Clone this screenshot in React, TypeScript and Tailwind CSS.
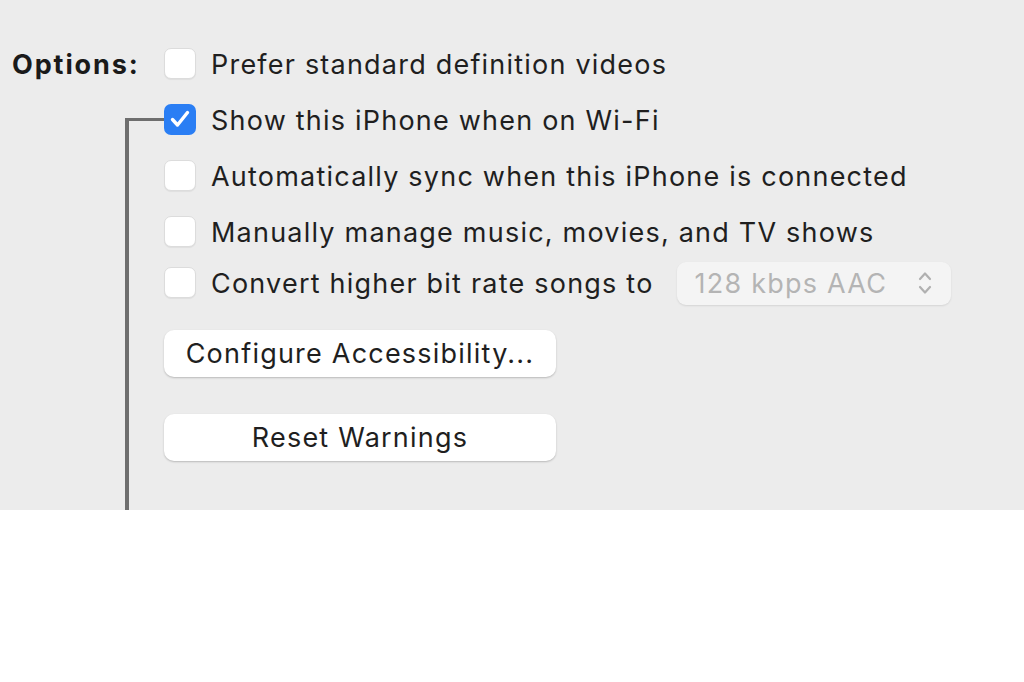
import React from "react";

const font = { fontFamily: "Inter, 'Noto Sans', sans-serif" };

function Box({ checked = false }: { checked?: boolean }) {
  if (checked) {
    return (
      <div className="w-[32px] h-[31px] rounded-[7px] bg-[#2a7ef4] flex items-center justify-center shrink-0">
        <svg width="22" height="20" viewBox="0 0 22 20">
          <path d="M3.5 10.5 L8.5 16 L18.5 3.5" fill="none" stroke="white" strokeWidth="3.4" strokeLinecap="round" strokeLinejoin="round" />
        </svg>
      </div>
    );
  }
  return (
    <div className="w-[32px] h-[31px] rounded-[7px] bg-white border border-[#dcdcdc] shadow-[0_1px_1px_rgba(0,0,0,0.06)] shrink-0" />
  );
}

function Row({ checked, label, h = "h-[56px]", children }: { checked?: boolean; label: string; h?: string; children?: React.ReactNode }) {
  return (
    <div className={`flex items-center ${h}`}>
      <Box checked={checked} />
      <span className="ml-[15px] mt-[3px] text-[27px] tracking-[0.045em] text-[#1f1f1f] leading-none">{label}</span>
      {children}
    </div>
  );
}

function Btn({ label }: { label: string }) {
  return (
    <div className="w-[392px] h-[47px] rounded-[10px] bg-white shadow-[0_1px_2px_rgba(0,0,0,0.22)] flex items-center justify-center text-[27px] tracking-[0.045em] text-[#1f1f1f] leading-none">
      {label}
    </div>
  );
}

export default function App() {
  return (
    <div className="w-full h-[682px] bg-white" style={font}>
      <div className="relative h-[510px] bg-[#ececec] pt-[35px] flex">
        <div className="absolute left-[125px] top-[118px] w-[39px] h-[392px] border-l-[4px] border-t-[3px] border-[#6e6e6e]" />
        <div className="w-[164px] shrink-0 pl-[12px] h-[56px] flex items-center">
          <span className="mt-[3px] text-[27px] tracking-[0.07em] font-bold text-[#1a1a1a] leading-none">Options:</span>
        </div>
        <div className="flex flex-col relative">
          <Row label="Prefer standard definition videos" />
          <Row checked label="Show this iPhone when on Wi-Fi" />
          <Row label="Automatically sync when this iPhone is connected" />
          <Row label="Manually manage music, movies, and TV shows" />
          <Row label="Convert higher bit rate songs to" h="h-[46px]">
            <div className="ml-[23px] mt-[2px] w-[274px] h-[43px] rounded-[9px] bg-[#f4f4f4] shadow-[0_1px_2px_rgba(0,0,0,0.1)] flex items-center justify-between pl-[18px] pr-[19px] shrink-0">
              <span className="text-[27px] tracking-[0.045em] text-[#b4b4b4] leading-none">128 kbps AAC</span>
              <svg width="14" height="28" viewBox="0 0 14 28">
                <path d="M2 10 L7 4.5 L12 10 M2 18 L7 23.5 L12 18" fill="none" stroke="#b0b0b0" strokeWidth="2.2" strokeLinecap="round" strokeLinejoin="round" />
              </svg>
            </div>
          </Row>
          <div className="mt-[25px]">
            <Btn label="Configure Accessibility..." />
          </div>
          <div className="mt-[37px]">
            <Btn label="Reset Warnings" />
          </div>
        </div>
      </div>
    </div>
  );
}
